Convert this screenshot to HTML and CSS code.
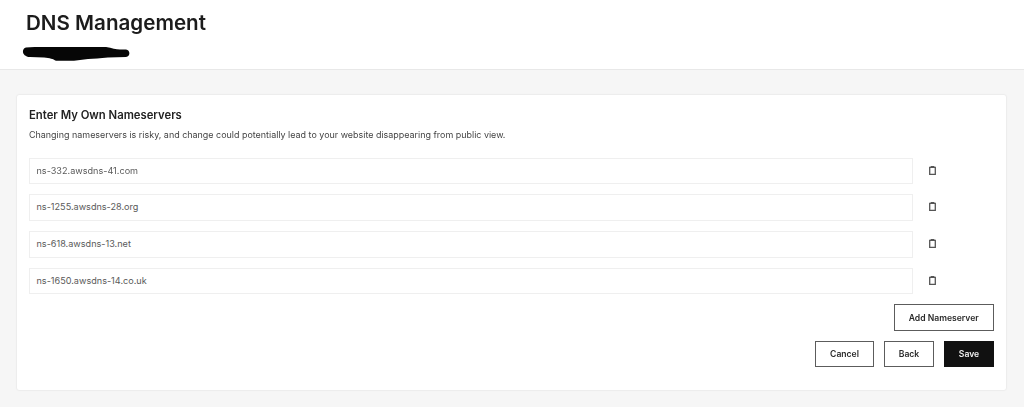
FILE: index.html
```html
<!DOCTYPE html>
<html lang="en">
<head>
<meta charset="utf-8">
<title>DNS Management</title>
<link rel="stylesheet" href="styles.css">
</head>
<body>
<header class="top">
  <h1 class="title">DNS Management</h1>
  <svg class="redact" width="108" height="16" viewBox="0 0 108 16"><path d="M4 1.5 C12 .8 24 1 36 1 L84 1 C90 2 94 3.5 98 3.5 L104 3.5 C108.500 4 108.500 10.500 104 11 L86 11.500 C78 12 72 13 66 13 L52 14.800 L34 14.800 C31 13 28 12 22 11.500 L8 11 C0 10.500 -1 3 4 1.500 Z" fill="#060606"/></svg>
</header>
<main class="page">
  <section class="card">
    <h2 class="card-title">Enter My Own Nameservers</h2>
    <p class="card-text">Changing nameservers is risky, and change could potentially lead to your website disappearing from public view.</p>
    <div class="rows">
      <div class="row"><div class="field">ns-332.awsdns-41.com</div><svg class="trash" width="7" height="9" viewBox="0 0 7 9"><path d="M2.300 .9V.4h2.400v.5M.7 1.300h5.600v7H.7z" fill="none" stroke="#555" stroke-width="1.300"/></svg></div>
      <div class="row"><div class="field">ns-1255.awsdns-28.org</div><svg class="trash" width="7" height="9" viewBox="0 0 7 9"><path d="M2.300 .9V.4h2.400v.5M.7 1.300h5.600v7H.7z" fill="none" stroke="#555" stroke-width="1.300"/></svg></div>
      <div class="row"><div class="field">ns-618.awsdns-13.net</div><svg class="trash" width="7" height="9" viewBox="0 0 7 9"><path d="M2.300 .9V.4h2.400v.5M.7 1.300h5.600v7H.7z" fill="none" stroke="#555" stroke-width="1.300"/></svg></div>
      <div class="row"><div class="field">ns-1650.awsdns-14.co.uk</div><svg class="trash" width="7" height="9" viewBox="0 0 7 9"><path d="M2.300 .9V.4h2.400v.5M.7 1.300h5.600v7H.7z" fill="none" stroke="#555" stroke-width="1.300"/></svg></div>
    </div>
    <div class="add-line"><button class="btn btn-add">Add Nameserver</button></div>
    <div class="actions">
      <button class="btn btn-cancel">Cancel</button>
      <button class="btn btn-back">Back</button>
      <button class="btn btn-save">Save</button>
    </div>
  </section>
</main>
</body>
</html>
```
FILE: styles.css
```css
* { box-sizing: border-box; }
html, body { margin: 0; padding: 0; }
body {
  width: 1024px;
  height: 407px;
  overflow: hidden;
  background: #f6f6f6;
  font-family: Inter, "Liberation Sans", sans-serif;
  color: #1b1b1b;
  filter: blur(.35px);
}
.top {
  height: 70px;
  background: #fff;
  border-bottom: 1px solid #e8e8e8;
  padding: 10px 0 0 22px;
}
.title {
  margin: 0 0 0 4px;
  font-size: 20.6px;
  line-height: 26px;
  font-weight: 600;
  color: #1c1c1c;
}
.redact { display: block; margin-top: 10px; }
.page { padding: 25px 18px 0 17px; }
.card {
  height: 295px;
  background: #fff;
  border-radius: 2px;
  box-shadow: 0 0 2px rgba(0,0,0,.14);
  padding: 13px 12px 0;
}
.card-title {
  margin: 0;
  font-size: 11.3px;
  line-height: 14px;
  font-weight: 600;
  color: #222;
}
.card-text {
  margin: 7px 0 0;
  font-size: 8.95px;
  line-height: 12px;
  color: #444;
}
.rows { margin-top: 16.5px; display: flex; flex-direction: column; gap: 10.2px; }
.row { display: flex; align-items: center; height: 26.6px; }
.field {
  width: 884px;
  height: 26.6px;
  border: 1px solid #efefef;
  background: #fff;
  padding: 0 6.5px;
  font-size: 9.1px;
  line-height: 24.6px;
  color: #5a5a5a;
}
.trash { margin: 0 0 1.5px 16px; flex: none; }
.add-line { display: flex; justify-content: flex-end; margin-top: 10px; }
.actions { display: flex; justify-content: flex-end; gap: 10px; margin-top: 9.5px; }
.btn {
  height: 26.6px;
  padding: 0;
  border: 1.5px solid #5c5c5c;
  background: #fff;
  font-family: inherit;
  font-size: 8.6px;
  font-weight: 600;
  color: #2a2a2a;
}
.btn-add { width: 100.5px; }
.btn-cancel { width: 59px; }
.btn-back { width: 50px; }
.btn-save { width: 50px; background: #111; border-color: #111; color: #f2f2f2; }
```
